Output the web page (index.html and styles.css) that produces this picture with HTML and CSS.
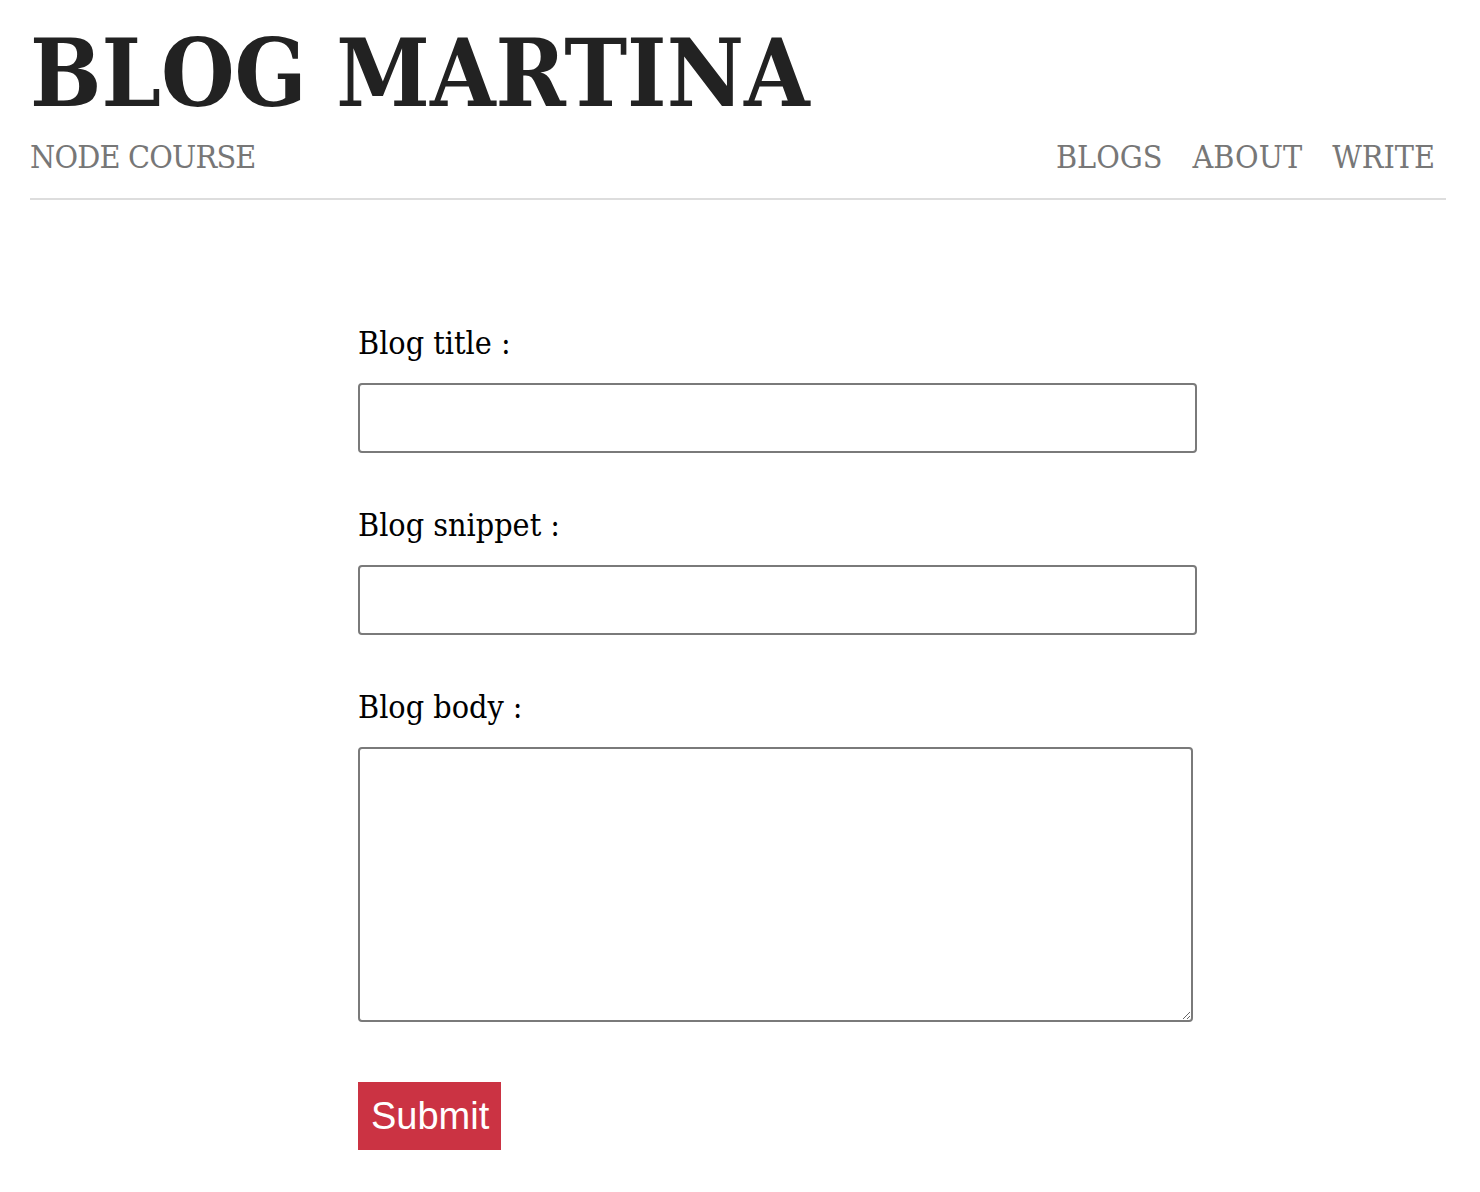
FILE: index.html
```html
<!DOCTYPE html>
<html lang="en">
<head>
<meta charset="utf-8">
<title>Blog Martina | Create</title>
<link rel="stylesheet" href="styles.css">
</head>
<body>
  <header class="site-header">
    <h1 class="site-title">BLOG MARTINA</h1>
    <nav class="site-nav">
      <a class="brand" href="#">NODE COURSE</a>
      <ul class="nav-links">
        <li><a href="#">BLOGS</a></li>
        <li><a href="#">ABOUT</a></li>
        <li><a href="#">WRITE</a></li>
      </ul>
    </nav>
  </header>
  <main class="create-blog">
    <form class="blog-form">
      <label class="field-label" for="title">Blog title :</label>
      <input class="field-input" type="text" id="title" name="title">
      <label class="field-label" for="snippet">Blog snippet :</label>
      <input class="field-input" type="text" id="snippet" name="snippet">
      <label class="field-label" for="body">Blog body :</label>
      <textarea class="field-area" id="body" name="body"></textarea>
      <button class="submit-btn" type="submit">Submit</button>
    </form>
  </main>
</body>
</html>
```

FILE: styles.css
```css
html, body {
  margin: 0;
  padding: 0;
  background: #fff;
}

body {
  font-family: "DejaVu Serif", "Liberation Serif", serif;
  font-stretch: condensed;
  color: #000;
}

.site-header {
  margin: 0 34px 0 30px;
  padding-top: 26px;
}

.site-title {
  margin: 0;
  font-size: 94px;
  line-height: 94px;
  font-weight: 700;
  color: #222;
}

.site-nav {
  margin-top: 17px;
  display: flex;
  justify-content: space-between;
  align-items: baseline;
  padding-bottom: 21px;
  border-bottom: 2px solid #ddd;
  font-size: 32px;
  line-height: 40px;
}

.site-nav a {
  color: #777;
  text-decoration: none;
}

.brand {
  letter-spacing: -0.8px;
}

.nav-links {
  list-style: none;
  margin: 0;
  padding: 0 11px 0 0;
  display: flex;
  gap: 30px;
}

.create-blog {
  padding: 123px 0 0 358px;
}

.blog-form {
  width: 839px;
}

.field-label {
  display: block;
  font-size: 32px;
  line-height: 40px;
  margin-bottom: 20px;
}

.field-input {
  display: block;
  box-sizing: border-box;
  width: 839px;
  height: 70px;
  margin: 0 0 52px 0;
  border: 2px solid #7a7a7a;
  border-radius: 4px;
  background: #fff;
  font-size: 32px;
  padding: 4px 10px;
}

.field-area {
  display: block;
  box-sizing: border-box;
  width: 835px;
  height: 275px;
  margin: 0 0 60px 0;
  border: 2px solid #7a7a7a;
  border-radius: 4px;
  background: #fff;
  font-size: 32px;
  padding: 4px 10px;
}

.submit-btn {
  display: block;
  margin: 0;
  border: none;
  background: #cb3343;
  color: #fff;
  font-family: "Liberation Sans", Arial, sans-serif;
  font-stretch: normal;
  font-size: 38px;
  line-height: 44px;
  padding: 12px 12px 12px 13px;
  cursor: pointer;
}
```
